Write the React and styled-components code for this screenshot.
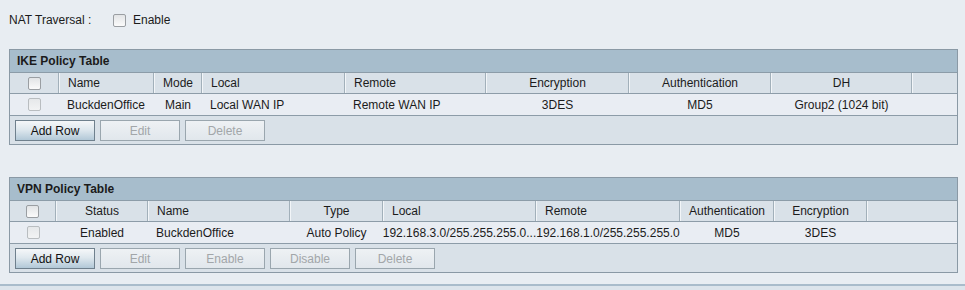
import React from 'react'
import styled, { createGlobalStyle, css } from 'styled-components'

const GlobalStyle = createGlobalStyle`
  html, body {
    margin: 0;
    padding: 0;
    background: #e8edf2;
    font-family: "Liberation Sans", Arial, sans-serif;
    font-size: 12px;
    color: #1b1b1b;
  }
  * { box-sizing: border-box; }
`;

const Page = styled.div`
  width: 965px;
  height: 290px;
  overflow: hidden;
  display: flex;
  flex-direction: column;
`;

const NatRow = styled.div`
  display: flex;
  align-items: center;
  height: 16px;
  margin: 12px 0 21px 9px;
`;

const NatLabel = styled.span`
  width: 104px;
`;

const Box = styled.span`
  display: inline-block;
  width: 13px;
  height: 13px;
  border: 1px solid ${p => (p.disabled ? '#b9bdc0' : '#9a9ea2')};
  border-radius: 2px;
  background: ${p =>
    p.disabled
      ? 'linear-gradient(#e6e8ea, #f2f3f4)'
      : 'linear-gradient(#e2e4e6, #fbfbfb)'};
`;

const CheckLabel = styled.span`
  margin-left: 7px;
`;

const Panel = styled.section`
  margin: 0 7px 0 9px;
  border: 1px solid #8a99a5;
  background: #d9e1e8;
  & + & {
    margin-top: 32px;
  }
`;

const TitleBar = styled.div`
  height: 23px;
  padding: 0 7px;
  display: flex;
  align-items: center;
  background: #a7bdcc;
  border-bottom: 1px solid #8c9ca8;
  font-weight: bold;
`;

const Row = styled.div`
  display: grid;
  grid-template-columns: ${p => p.cols.map(c => `${c}px`).join(' ')};
  border-bottom: 1px solid #8d9ca8;
  ${p =>
    p.head
      ? css`
          height: 21px;
          background: #d9e1e8;
        `
      : css`
          height: 22px;
          background: #e9edf3;
        `}
`;

const Cell = styled.div`
  display: flex;
  align-items: center;
  white-space: nowrap;
  overflow: visible;
  justify-content: ${p => (p.left ? 'flex-start' : 'center')};
  padding-left: ${p => (p.left ? '8px' : '0')};
  ${p =>
    p.head &&
    css`
      border-right: 1px solid #a2b0ba;
      border-left: 1px solid #f2f5f8;
      &:first-child { border-left: none; }
      &:last-child { border-right: none; }
    `}
`;

const ButtonBar = styled.div`
  display: flex;
  gap: 5px;
  height: 28px;
  padding: 4px 0 0 5px;
`;

const Button = styled.button`
  width: 80px;
  height: 21px;
  padding: 0;
  font: inherit;
  border-radius: 0;
  ${p =>
    p.primary
      ? css`
          color: #111;
          border: 1px solid #6f808d;
          background: linear-gradient(#f5f7f9, #dfe8ee 45%, #b2c8d7);
        `
      : css`
          color: #a2a6a9;
          border: 1px solid #9aa6ae;
          background: linear-gradient(#eef1f4, #e1e7ec);
        `}
`;

const Footer = styled.div`
  flex: 1;
  margin-top: 11px;
  border-top: 2px solid #a9bccb;
  background: #dce4eb;
`;

const ikeCols = [49, 95, 48, 143, 141, 143, 142, 141, 47];
const ikeHead = [
  ['', false], ['Name', true], ['Mode', false], ['Local', true], ['Remote', true],
  ['Encryption', false], ['Authentication', false], ['DH', false], ['', false],
];
const ikeRow = [
  ['BuckdenOffice', true], ['Main', false], ['Local WAN IP', true], ['Remote WAN IP', true],
  ['3DES', false], ['MD5', false], ['Group2 (1024 bit)', false], ['', false],
];

const vpnCols = [46, 92, 142, 93, 153, 144, 94, 93, 92];
const vpnHead = [
  ['', false], ['Status', false], ['Name', true], ['Type', false], ['Local', true],
  ['Remote', true], ['Authentication', false], ['Encryption', false], ['', false],
];
const vpnRow = [
  ['Enabled', false], ['BuckdenOffice', true], ['Auto Policy', false],
  ['192.168.3.0/255.255.255.0...', false], ['192.168.1.0/255.255.255.0', false],
  ['MD5', false], ['3DES', false], ['', false],
];

const PolicyTable = ({ title, cols, head, row, buttons }) => (
  <Panel>
    <TitleBar>{title}</TitleBar>
    <Row head cols={cols}>
      {head.map(([text, left], i) => (
        <Cell head key={i} left={left}>
          {i === 0 ? <Box /> : text}
        </Cell>
      ))}
    </Row>
    <Row cols={cols}>
      <Cell><Box disabled /></Cell>
      {row.map(([text, left], i) => (
        <Cell key={i} left={left}>{text}</Cell>
      ))}
    </Row>
    <ButtonBar>
      {buttons.map((b, i) => (
        <Button key={b} primary={i === 0}>{b}</Button>
      ))}
    </ButtonBar>
  </Panel>
)

export default function App() {
  return (
    <Page>
      <GlobalStyle />
      <NatRow>
        <NatLabel>NAT Traversal :</NatLabel>
        <Box />
        <CheckLabel>Enable</CheckLabel>
      </NatRow>
      <PolicyTable
        title="IKE Policy Table"
        cols={ikeCols}
        head={ikeHead}
        row={ikeRow}
        buttons={['Add Row', 'Edit', 'Delete']}
      />
      <PolicyTable
        title="VPN Policy Table"
        cols={vpnCols}
        head={vpnHead}
        row={vpnRow}
        buttons={['Add Row', 'Edit', 'Enable', 'Disable', 'Delete']}
      />
      <Footer />
    </Page>
  )
}
